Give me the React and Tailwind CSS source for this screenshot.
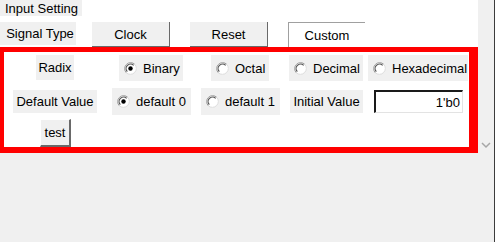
import React from "react";

function Radio({ checked }) {
  return (
    <svg width="13" height="13" viewBox="0 0 13 13" className="shrink-0">
      <circle cx="6.5" cy="6.5" r="6" fill="#ffffff" />
      <path d="M2.26 10.74 A6 6 0 0 1 10.74 2.26" fill="none" stroke="#9a9a9a" strokeWidth="1" />
      <path d="M3.32 9.68 A4.5 4.5 0 0 1 9.68 3.32" fill="none" stroke="#555555" strokeWidth="1.2" />
      <path d="M10.74 2.26 A6 6 0 0 1 2.26 10.74" fill="none" stroke="#dcdcdc" strokeWidth="1" />
      {checked ? <circle cx="6.5" cy="6.5" r="2.2" fill="#000000" /> : null}
    </svg>
  );
}

function Option({ label, checked, className }) {
  return (
    <div className={`flex items-center gap-[6px] bg-[#f0f0f0] pl-[5px] ${className}`}>
      <Radio checked={checked} />
      <span>{label}</span>
    </div>
  );
}

function Label({ children, className }) {
  return <div className={`flex items-center justify-center bg-[#f0f0f0] ${className}`}>{children}</div>;
}

export default function App() {
  return (
    <div className="flex h-[242px] w-[495px] bg-[#f0f0f0] text-[13px] leading-none text-black" style={{ fontFamily: '"Liberation Sans", Arial, sans-serif' }}>
      <div className="flex w-[478px] flex-col">
        <div className="flex flex-col bg-white">
          <div className="flex h-[16px] w-[82px] items-center bg-[#f0f0f0] pl-[5px]">Input Setting</div>
          <div className="mt-[6px] flex h-[25px] items-start">
            <Label className="h-[23px] w-[76px] pl-[4px]">Signal Type</Label>
            <button className="ml-[16px] flex h-[25px] w-[78px] items-center justify-center border-r border-b border-[#696969] bg-[#f0f0f0]">Clock</button>
            <button className="ml-[20px] flex h-[25px] w-[78px] items-center justify-center border-r border-b border-[#696969] bg-[#f0f0f0]">Reset</button>
            <div className="ml-[20px] flex h-[25px] w-[77px] items-center justify-center border-l border-t border-[#a0a0a0] bg-white">Custom</div>
          </div>
          <div className="flex h-[106px] flex-col border-t-[5px] border-r-[9px] border-b-[6px] border-l-[4px] border-[#ff0000] bg-white">
            <div className="mt-[3px] flex h-[26px] items-start">
              <Label className="ml-[32px] h-[25px] w-[38px]">Radix</Label>
              <Option className="ml-[45px] h-[26px] w-[64px]" label="Binary" checked />
              <Option className="ml-[28px] h-[26px] w-[58px]" label="Octal" />
              <Option className="ml-[20px] h-[26px] w-[74px]" label="Decimal" />
              <Option className="ml-[5px] h-[26px] w-[100px]" label="Hexadecimal" />
            </div>
            <div className="mt-[7px] flex h-[27px] items-center">
              <Label className="ml-[9px] h-[23px] w-[84px]">Default Value</Label>
              <Option className="ml-[15px] h-[27px] w-[79px]" label="default 0" checked />
              <Option className="ml-[10px] h-[27px] w-[79px]" label="default 1" />
              <Label className="ml-[10px] h-[23px] w-[73px]">Initial Value</Label>
              <div className="ml-[11px] flex h-[23px] w-[89px] items-center justify-end border-t-2 border-l-2 border-r border-b border-t-[#1a1a1a] border-l-[#1a1a1a] border-r-[#e3e3e3] border-b-[#e3e3e3] bg-white pr-[2px]">1'b0</div>
            </div>
            <div className="mt-[4px] flex">
              <button className="ml-[36px] flex h-[28px] w-[31px] items-center justify-center border-t border-l border-r-2 border-b-2 border-t-white border-l-white border-r-[#696969] border-b-[#696969] bg-[#f0f0f0]">test</button>
            </div>
          </div>
        </div>
      </div>
      <div className="flex w-[17px] flex-col border-r border-[#3c3c3c] bg-[#f0f0f0]">
        <svg width="16" height="10" viewBox="0 0 16 10" className="mt-[140px]">
          <polyline points="4,3 8,7 12,3" fill="none" stroke="#a6a6a6" strokeWidth="1.5" />
        </svg>
      </div>
    </div>
  );
}
